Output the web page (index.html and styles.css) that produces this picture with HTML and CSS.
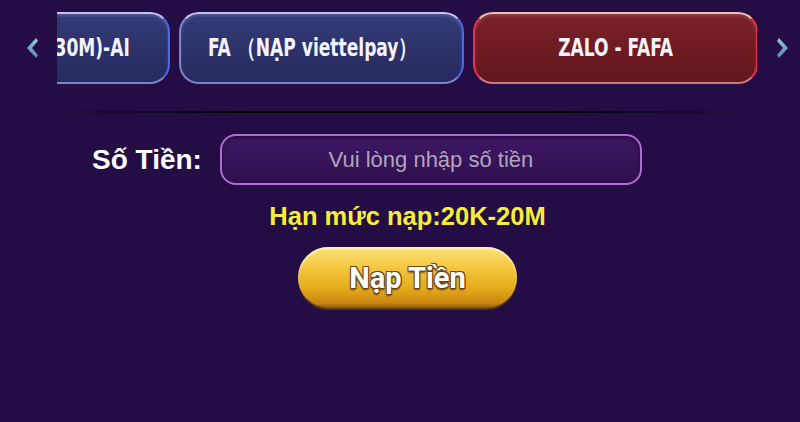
FILE: index.html
```html
<!DOCTYPE html>
<html lang="vi">
<head>
  <meta charset="UTF-8" />
  <meta name="viewport" content="width=device-width, initial-scale=1.0" />
  <title>Nạp Tiền</title>
  <link rel="stylesheet" href="styles.css">
</head>
<body>
  <div class="tabs-bar">
    <button class="arrow" aria-label="Trước">
      <svg width="16" height="24" viewBox="0 0 16 24">
        <defs>
          <linearGradient id="arrowGrad" x1="0" y1="0" x2="0" y2="1">
            <stop offset="0" stop-color="#9cc6dc" />
            <stop offset="1" stop-color="#4f8aa6" />
          </linearGradient>
        </defs>
        <path d="M12 2 L3 12 L12 22 L14 19 L8 12 L14 5 Z" fill="url(#arrowGrad)" />
      </svg>
    </button>

    <div class="tabs-view">
      <div class="tabs-track">
        <div class="tab tab-first"><span>NẠP (10K-30M)-AI</span></div>
        <div class="tab tab-left"><span>FA （NẠP viettelpay）</span></div>
        <div class="tab active"><span>ZALO - FAFA</span></div>
      </div>
    </div>

    <button class="arrow" aria-label="Sau">
      <svg width="16" height="24" viewBox="0 0 16 24">
        <path d="M4 2 L13 12 L4 22 L2 19 L8 12 L2 5 Z" fill="url(#arrowGrad)" />
      </svg>
    </button>
  </div>

  <div class="divider"></div>

  <div class="form">
    <div class="row">
      <label for="amount" class="label">Số Tiền:</label>
      <input id="amount" class="amount" type="text" placeholder="Vui lòng nhập số tiền" />
    </div>

    <p class="limit">Hạn mức nạp:20K-20M</p>

    <button class="submit">Nạp Tiền</button>
  </div>
</body>
</html>
```

FILE: styles.css
```css
body {
  margin: 0;
  background-color: #240d44;
  font-family: 'Liberation Sans', Arial, sans-serif;
  color: white;
  height: 422px;
  overflow: hidden;
}

.tabs-bar {
  display: flex;
  align-items: center;
  padding-top: 12px;
  height: 72px;
}

.arrow {
  width: 57px;
  height: 72px;
  padding: 0;
  background: transparent;
  border: none;
  display: flex;
  align-items: center;
  justify-content: center;
  cursor: pointer;
}

.arrow:first-child {
  justify-content: flex-start;
  padding-left: 24px;
}

.arrow:last-child {
  width: 43px;
  justify-content: flex-start;
  padding-left: 18px;
}

.tabs-view {
  width: 700px;
  height: 72px;
  overflow: hidden;
}

.tabs-track {
  display: flex;
  gap: 9px;
  margin-left: -172px;
}

.tab {
  flex: none;
  width: 285px;
  min-width: 0;
  height: 72px;
  box-sizing: border-box;
  border-radius: 20px;
  display: flex;
  align-items: center;
  justify-content: center;
  font-family: 'DejaVu Sans Condensed', 'Liberation Sans Narrow', sans-serif;
  font-weight: bold;
  font-size: 25px;
  color: #f4f4ff;
  background: linear-gradient(#343b78, #2b3068 60%, #262a5e);
  border: 2px solid #7d84c8;
  border-top-color: #c4c2f0;
  border-right-color: #4a6ae8;
  box-shadow: inset 0 2px 3px rgba(255, 255, 255, 0.15);
  white-space: nowrap;
}

.tab span {
  display: inline-block;
  flex: none;
  transform: scaleX(0.76);
  padding-bottom: 2px;
}

.tab-first {
  justify-content: flex-end;
  padding-right: 38px;
}

.tab-first span {
  transform-origin: right center;
}

.tab-left {
  padding-right: 18px;
}

.tab.active {
  background: linear-gradient(#7a2228, #6c1a21 60%, #65161d);
  border-color: #c77c80;
  border-top-color: #f0c0b8;
  border-left-color: #e8304a;
  border-right-color: #e8304a;
}

.divider {
  height: 2px;
  margin: 27px 40px 0;
  background: linear-gradient(90deg, rgba(0, 0, 0, 0), #000 30%, #000 70%, rgba(0, 0, 0, 0));
}

.form {
  display: flex;
  flex-direction: column;
  align-items: center;
}

.row {
  align-self: flex-start;
  display: flex;
  align-items: center;
  margin: 21px 0 0 92px;
  gap: 18px;
}

.label {
  font-family: 'Liberation Sans', Arial, sans-serif;
  font-weight: bold;
  font-size: 28px;
  color: #ffffff;
}

.amount {
  width: 422px;
  height: 51px;
  box-sizing: border-box;
  border-radius: 16px;
  border: 2px solid #b26ad8;
  background: linear-gradient(#3e1764, #371459 50%, #2f104e);
  box-shadow: inset 0 2px 4px rgba(0, 0, 0, 0.45);
  color: white;
  text-align: center;
  font-family: 'Liberation Sans', Arial, sans-serif;
  font-size: 22px;
  outline: none;
}

.amount::placeholder {
  color: #b0a4bf;
}

.limit {
  margin: 17px 0 0 15px;
  font-family: 'Liberation Sans', Arial, sans-serif;
  font-weight: bold;
  font-size: 25.5px;
  color: #f5ef3a;
}

.submit {
  margin: 16px 0 0 15px;
  width: 219px;
  height: 61px;
  border-radius: 31px;
  border: none;
  background: linear-gradient(#fbe27a, #f4c63c 35%, #e3a91a 70%, #c98512 92%, #8e5a10);
  box-shadow: inset 0 2px 2px rgba(255, 255, 240, 0.7), 0 2px 0 #5a3510;
  font-family: Roboto, 'Liberation Sans', sans-serif;
  font-weight: bold;
  font-size: 29px;
  color: #ffffff;
  text-shadow: -1px -1px 0 #6a4418, 1px -1px 0 #6a4418, -1px 1px 0 #6a4418, 1px 1px 0 #6a4418, 0 2px 2px #5a3510;
  cursor: pointer;
}
```
